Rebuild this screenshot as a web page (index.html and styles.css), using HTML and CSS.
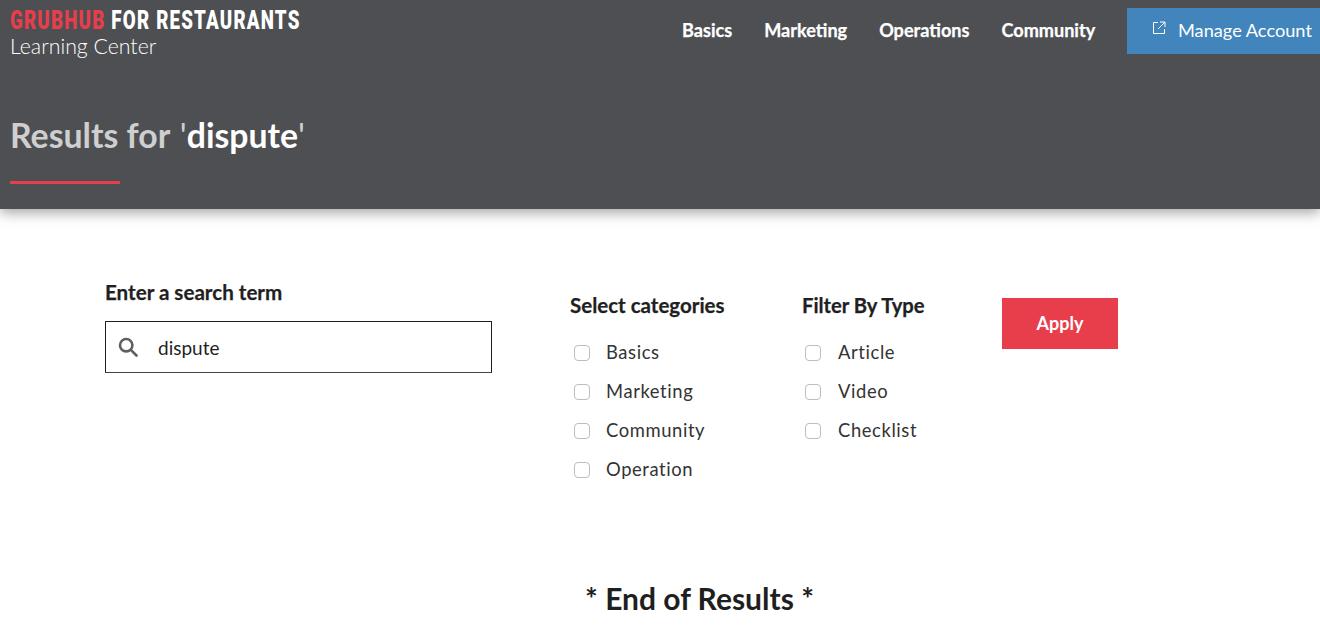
FILE: index.html
```html
<!DOCTYPE html>
<html lang="en">
<head>
<meta charset="utf-8">
<title>Results for dispute</title>
<link rel="stylesheet" href="styles.css">
</head>
<body>
<header class="hero">
  <div class="topbar">
    <div class="logo">
      <div class="logo-main"><span class="logo-red">GRUBHUB</span> FOR RESTAURANTS</div>
      <div class="logo-sub">Learning Center</div>
    </div>
    <nav class="nav">
      <a class="nav-link">Basics</a>
      <a class="nav-link">Marketing</a>
      <a class="nav-link">Operations</a>
      <a class="nav-link">Community</a>
    </nav>
    <a class="manage">
      <svg class="manage-icon" width="14" height="14" viewBox="0 0 14 14" fill="none" stroke="#fff" stroke-width="1">
        <path d="M6 1.5H1.5V12.5H12.5V8"/>
        <path d="M8 1H13V6M13 1L6 8"/>
      </svg>
      <span>Manage Account</span>
    </a>
  </div>
  <h1 class="title">Results for <span class="title-term">'<b>dispute</b>'</span></h1>
  <div class="rule"></div>
</header>
<main class="filters">
  <section class="search-col">
    <h2 class="label">Enter a search term</h2>
    <div class="search-box">
      <svg width="20" height="20" viewBox="0 0 20 20" fill="none" stroke="#5f5f5f" stroke-width="2.6">
        <circle cx="8.2" cy="8.2" r="6.2"/>
        <path d="M12.8 12.8L18.5 18.5" stroke-linecap="round"/>
      </svg>
      <span class="search-text">dispute</span>
    </div>
  </section>
  <section class="cat-col">
    <h2 class="label">Select categories</h2>
    <ul class="checks">
      <li class="check"><span class="box"></span>Basics</li>
      <li class="check"><span class="box"></span>Marketing</li>
      <li class="check"><span class="box"></span>Community</li>
      <li class="check"><span class="box"></span>Operation</li>
    </ul>
  </section>
  <section class="type-col">
    <h2 class="label">Filter By Type</h2>
    <ul class="checks">
      <li class="check"><span class="box"></span>Article</li>
      <li class="check"><span class="box"></span>Video</li>
      <li class="check"><span class="box"></span>Checklist</li>
    </ul>
  </section>
  <button class="apply">Apply</button>
</main>
<p class="end">* End of Results *</p>
</body>
</html>
```
FILE: styles.css
```css
* { box-sizing: border-box; }
html, body { margin: 0; height: 644px; overflow: hidden; }
body { background: #fff; color: #1f1f1f; font-family: "Lato", "Liberation Sans", sans-serif; }

.hero { height: 209px; background: #4e4f53; box-shadow: 0 4px 12px rgba(0,0,0,.35); padding-left: 10px; position: relative; }
.topbar { display: flex; align-items: flex-start; height: 115px; }
.logo { width: 600px; padding-top: 6px; }
.logo-main { font-family: "Roboto", "Liberation Sans", sans-serif; font-weight: 900; font-size: 26px; line-height: 28px; letter-spacing: 1.65px; color: #fff; white-space: nowrap; transform: scaleX(.72); transform-origin: left center; }
.logo-red { color: #e83e4c; }
.logo-sub { font-size: 21.3px; font-weight: 300; line-height: 24px; color: #fff; }
.nav { display: flex; gap: 32px; margin-left: 72px; padding-top: 20px; }
.nav-link { font-size: 18.1px; font-weight: 700; line-height: 21px; color: #fff; -webkit-text-stroke: .25px #fff; }
.manage { display: flex; align-items: center; gap: 12px; margin-left: auto; margin-top: 8px; width: 193px; height: 46px; padding: 0 0 3px 25px; background: #4285bd; color: #fff; font-size: 18.2px; font-weight: 400; white-space: nowrap; }
.manage-icon { flex: none; margin-top: -4px; }
.title { margin: 0; font-size: 33.8px; font-weight: 700; line-height: 40px; color: #cfcfcf; }
.title-term { font-weight: 400; margin-left: 2px; }
.title-term b { font-weight: 700; color: #fff; }
.rule { width: 110px; height: 3px; background: #e83e4c; margin-top: 26px; }

.filters { display: flex; align-items: flex-start; padding: 71px 0 0 105px; height: 347px; }
.label { margin: 0; font-size: 20.6px; font-weight: 700; line-height: 24px; color: #1f1f1f; -webkit-text-stroke: .25px #1f1f1f; }
.search-col { width: 465px; }
.search-box { display: flex; align-items: center; gap: 20px; width: 387px; height: 52px; margin-top: 17px; padding-left: 12px; border: 1px solid #1f1f1f; border-bottom-color: #444; }
.search-text { font-size: 19px; }
.cat-col { width: 232px; margin-top: 13px; }
.cat-col .label { font-size: 20.5px; }
.type-col { width: 200px; margin-top: 13px; }
.type-col .label { font-size: 20.2px; }
.checks { list-style: none; margin: 15px 0 0; padding: 0; }
.check { display: flex; align-items: center; height: 39px; font-size: 18.4px; letter-spacing: .6px; color: #333; }
.box { width: 16px; height: 16px; margin: 3px 16px 0 4px; border: 1px solid #bdbdbd; border-radius: 4px; background: #fff; }
.type-col .box { margin: 3px 17px 0 3px; }
.apply { width: 116px; height: 51px; margin-top: 18px; padding: 0 0 2px; border: 0; background: #e83e4c; color: #fff; font-family: inherit; font-size: 18px; font-weight: 700; }
.end { margin: 23px 0 0; padding-left: 399px; width: 1000px; text-align: center; font-size: 30px; font-weight: 700; line-height: 38px; }
```
